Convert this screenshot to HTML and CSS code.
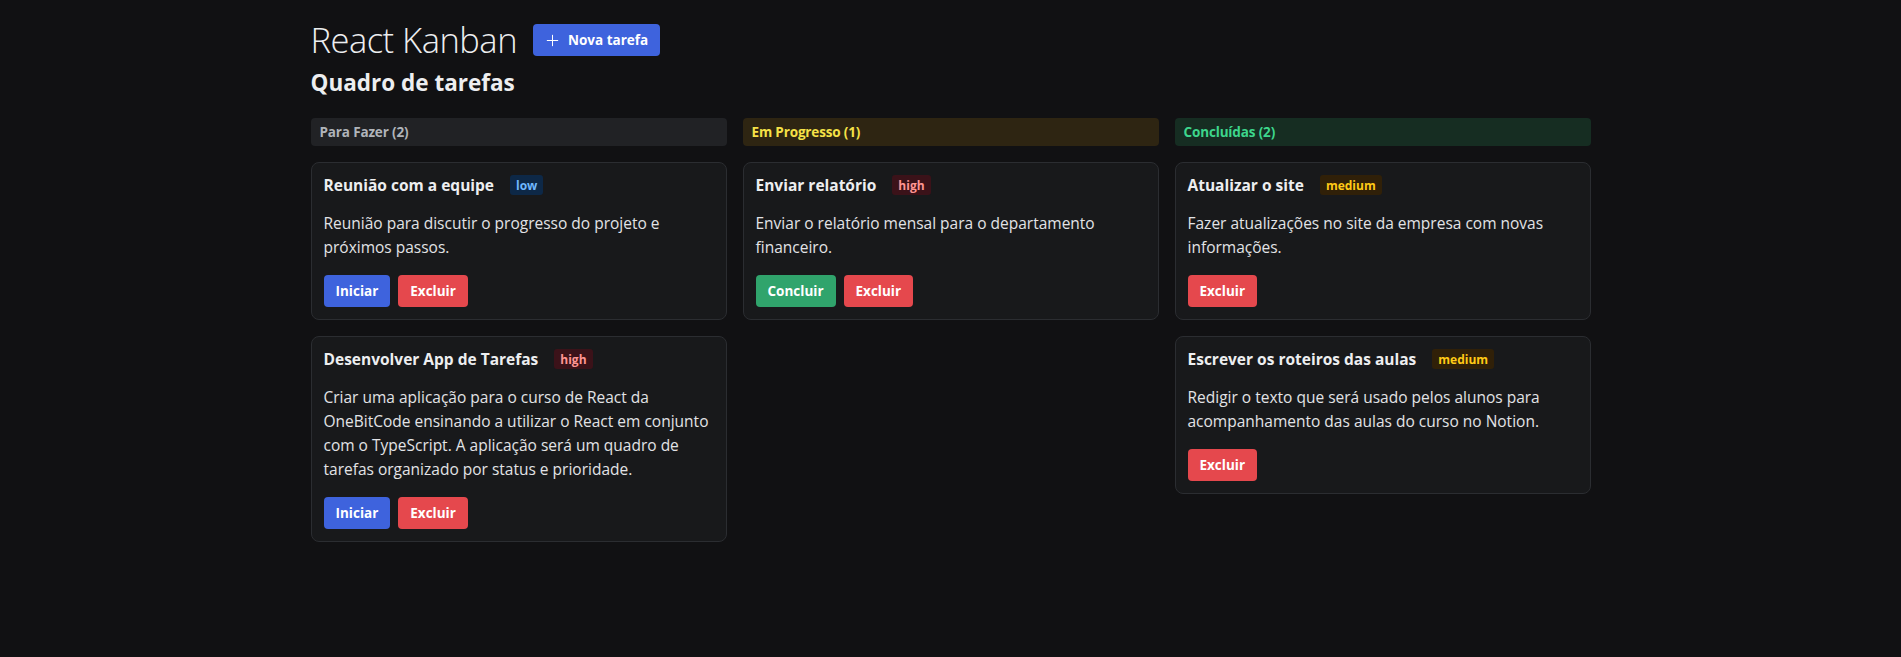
FILE: index.html
```html
<!DOCTYPE html>
<html lang="pt-BR">
<head>
<meta charset="utf-8">
<title>React Kanban</title>
<link rel="stylesheet" href="styles.css">
</head>
<body>
<main class="page">
  <header class="topbar">
    <h1 class="title">React Kanban</h1>
    <button class="btn btn-indigo btn-new">
      <svg class="icon" width="15" height="15" viewBox="0 0 15 15" fill="none"><path d="M7.5 2.25v10.5M2.25 7.5h10.5" stroke="currentColor" stroke-width="1" stroke-linecap="round"/></svg>
      Nova tarefa
    </button>
  </header>
  <h2 class="subtitle">Quadro de tarefas</h2>
  <section class="board">
    <div class="column">
      <div class="col-head col-gray">Para Fazer (2)</div>
      <article class="card">
        <div class="card-head"><h3 class="card-title">Reunião com a equipe</h3><span class="badge badge-blue">low</span></div>
        <p class="card-desc">Reunião para discutir o progresso do projeto e próximos passos.</p>
        <div class="actions"><button class="btn btn-indigo">Iniciar</button><button class="btn btn-red">Excluir</button></div>
      </article>
      <article class="card">
        <div class="card-head"><h3 class="card-title">Desenvolver App de Tarefas</h3><span class="badge badge-red">high</span></div>
        <p class="card-desc">Criar uma aplicação para o curso de React da OneBitCode ensinando a utilizar o React em conjunto com o TypeScript. A aplicação será um quadro de tarefas organizado por status e prioridade.</p>
        <div class="actions"><button class="btn btn-indigo">Iniciar</button><button class="btn btn-red">Excluir</button></div>
      </article>
    </div>
    <div class="column">
      <div class="col-head col-yellow">Em Progresso (1)</div>
      <article class="card">
        <div class="card-head"><h3 class="card-title">Enviar relatório</h3><span class="badge badge-red">high</span></div>
        <p class="card-desc">Enviar o relatório mensal para o departamento financeiro.</p>
        <div class="actions"><button class="btn btn-green">Concluir</button><button class="btn btn-red">Excluir</button></div>
      </article>
    </div>
    <div class="column">
      <div class="col-head col-green">Concluídas (2)</div>
      <article class="card">
        <div class="card-head"><h3 class="card-title">Atualizar o site</h3><span class="badge badge-amber">medium</span></div>
        <p class="card-desc">Fazer atualizações no site da empresa com novas informações.</p>
        <div class="actions"><button class="btn btn-red">Excluir</button></div>
      </article>
      <article class="card">
        <div class="card-head"><h3 class="card-title">Escrever os roteiros das aulas</h3><span class="badge badge-amber">medium</span></div>
        <p class="card-desc">Redigir o texto que será usado pelos alunos para acompanhamento das aulas do curso no Notion.</p>
        <div class="actions"><button class="btn btn-red">Excluir</button></div>
      </article>
    </div>
  </section>
</main>
</body>
</html>
```
FILE: styles.css
```css
* { box-sizing: border-box; }
html, body { margin: 0; background: #111113; }
body {
  font-family: "Open Sans", "Noto Sans", sans-serif;
  color: #edeef0;
}
.page {
  width: 1280px;
  margin: 0 auto;
  padding-top: 20px;
}
.topbar {
  display: flex;
  align-items: center;
  gap: 16px;
  height: 40px;
}
.title {
  margin: 0;
  font-size: 34.5px;
  font-weight: 300;
  letter-spacing: -0.5px;
  line-height: 40px;
  color: #edeef0;
}
.btn {
  font-family: inherit;
  border: 0;
  border-radius: 4px;
  height: 32px;
  padding: 0 12px;
  font-size: 13.5px;
  font-weight: 700;
  color: #fff;
  display: inline-flex;
  align-items: center;
  gap: 8px;
  cursor: pointer;
}
.icon { flex: none; }
.btn-indigo { background: #3e63dd; }
.btn-red { background: #e5484d; }
.btn-green { background: #30a46c; }
.subtitle {
  margin: 8px 0 0;
  font-size: 22.5px;
  font-weight: 700;
  line-height: 30px;
}
.board {
  display: grid;
  grid-template-columns: repeat(3, 1fr);
  gap: 16px;
  margin-top: 20px;
  align-items: start;
}
.column {
  display: flex;
  flex-direction: column;
  gap: 16px;
}
.col-head {
  height: 28px;
  border-radius: 4px;
  padding: 0 9px;
  display: flex;
  align-items: center;
  font-size: 13.5px;
  font-weight: 700;
  letter-spacing: -0.15px;
}
.col-gray { background: #212225; color: #b0b4ba; }
.col-yellow { background: #2e2512; color: #f5e147; }
.col-green { background: #162d22; color: #3dd68c; }
.card {
  background: #18191b;
  border: 1px solid #2b2d31;
  border-radius: 8px;
  padding: 12px;
  display: flex;
  flex-direction: column;
  gap: 16px;
}
.card-head {
  display: flex;
  align-items: center;
  gap: 16px;
  height: 20px;
}
.card-title {
  margin: 0;
  font-size: 15.5px;
  font-weight: 700;
  color: #edeef0;
}
.badge {
  height: 20px;
  padding: 0 6px;
  border-radius: 3px;
  font-size: 12px;
  font-weight: 700;
  display: inline-flex;
  align-items: center;
}
.badge-blue { background: #0d2847; color: #70b8ff; }
.badge-red { background: #3b1219; color: #ff9592; }
.badge-amber { background: #302008; color: #ffca16; }
.card-desc {
  margin: 0;
  font-size: 15.5px;
  line-height: 24px;
  color: #e2e3e6;
}
.actions {
  display: flex;
  gap: 8px;
}
```
